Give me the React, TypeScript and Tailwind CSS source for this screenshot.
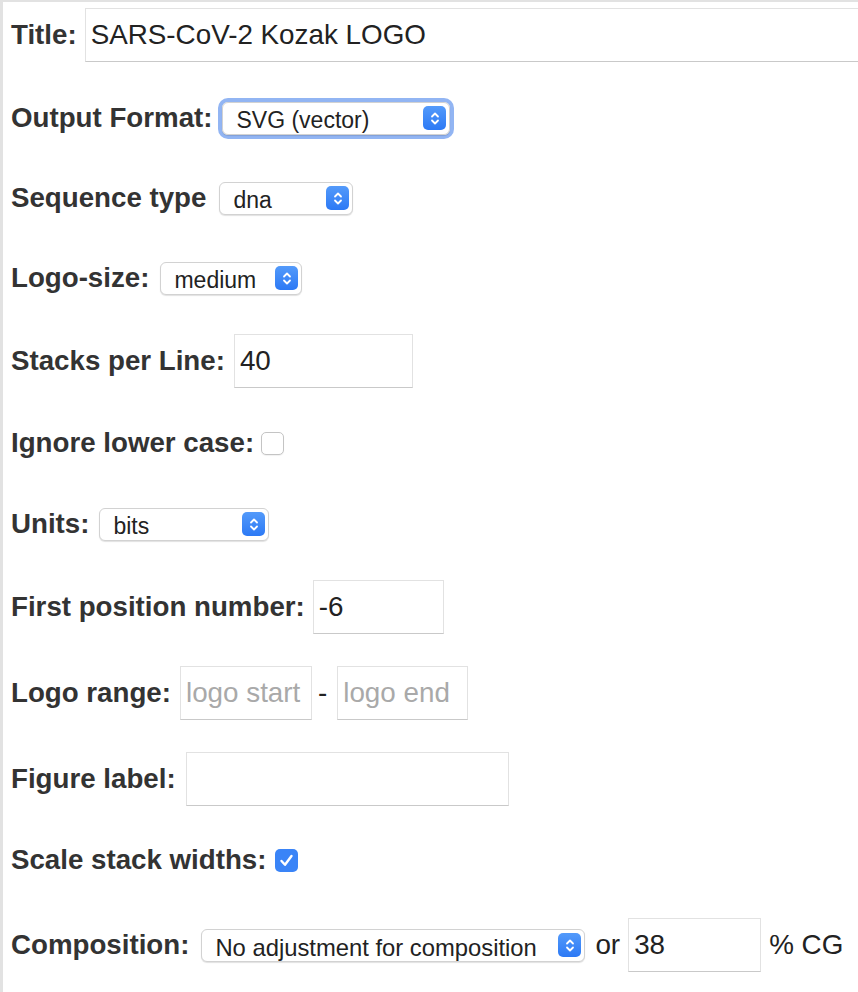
import React from 'react';

// up/down arrows of the mac style select button
const Chevrons = () => (
  <svg width="10" height="15" viewBox="0 0 10 15" fill="none" stroke="white" strokeWidth="1.8" strokeLinecap="round" strokeLinejoin="round">
    <path d="M2 5.5 L5 2.5 L8 5.5" />
    <path d="M2 9.5 L5 12.5 L8 9.5" />
  </svg>
);

const Select = ({ value, className, text = 'text-[23px]', focused = false }: { value: string; className: string; text?: string; focused?: boolean }) => (
  <div className={`relative shrink-0 rounded-[6px] ${focused ? 'shadow-[0_0_0_4px_#92b5f3]' : ''} ${className}`}>
    <select
      defaultValue={value}
      className={`block h-[33px] w-full appearance-none rounded-[6px] border border-[#d2d2d2] bg-white pl-[13px] text-[#222] shadow-[0_1px_1px_rgba(0,0,0,0.12)] outline-none ${text}`}
    >
      <option>{value}</option>
    </select>
    <span className="pointer-events-none absolute right-[4px] top-1/2 flex h-[24px] w-[23px] -translate-y-1/2 items-center justify-center rounded-[5px] bg-linear-to-b from-[#539afa] to-[#2c79f5]">
      <Chevrons />
    </span>
  </div>
);

const TextInput = ({ value = '', placeholder, className }: { value?: string; placeholder?: string; className: string }) => (
  <input
    defaultValue={value}
    placeholder={placeholder}
    className={`h-[54px] shrink-0 border border-[#e2e2e2] border-b-[#c9c9c9] bg-white pl-[5px] text-[27.8px] text-[#222] outline-none placeholder:text-[#a9a9a9] ${className}`}
  />
);

const Label = ({ children }: { children: React.ReactNode }) => (
  <span className="shrink-0 text-[27.7px] font-bold text-[#333]">{children}</span>
);

export default function App() {
  return (
    <div className="h-[992px] w-[858px] overflow-hidden border-l-[3px] border-t-2 border-[#e2e2e2] bg-white pl-2 pt-[6px] font-['Liberation_Sans',Arial,sans-serif] text-[#333]">
      <div className="flex h-[54px] items-center">
        <Label>Title:</Label>
        <TextInput value="SARS-CoV-2 Kozak LOGO" className="ml-2 w-[800px]" />
      </div>

      <div className="mt-[29px] flex h-[54px] items-center">
        <Label>Output Format:</Label>
        <Select value="SVG (vector)" focused className="ml-[10px] w-[228px]" />
      </div>

      <div className="mt-[26px] flex h-[54px] items-center">
        <Label>Sequence type</Label>
        <Select value="dna" className="ml-[13px] w-[134px]" />
      </div>

      <div className="mt-[26px] flex h-[54px] items-center">
        <Label>Logo-size:</Label>
        <Select value="medium" className="ml-[11px] w-[142px]" />
      </div>

      <div className="mt-[29px] flex h-[54px] items-center">
        <Label>Stacks per Line:</Label>
        <TextInput value="40" className="ml-[9px] w-[179px]" />
      </div>

      <div className="mt-[28px] flex h-[54px] items-center">
        <Label>Ignore lower case:</Label>
        <span className="ml-[7px] h-[23px] w-[23px] shrink-0 rounded-[5px] border border-[#c4c4c4] bg-white shadow-[0_1px_1px_rgba(0,0,0,0.06)]" />
      </div>

      <div className="mt-[27px] flex h-[54px] items-center">
        <Label>Units:</Label>
        <Select value="bits" className="ml-[10px] w-[170px]" />
      </div>

      <div className="mt-[29px] flex h-[54px] items-center">
        <Label>First position number:</Label>
        <TextInput value="-6" className="ml-2 w-[131px]" />
      </div>

      <div className="mt-[32px] flex h-[54px] items-center">
        <Label>Logo range:</Label>
        <TextInput placeholder="logo start" className="ml-[9px] w-[132px]" />
        <span className="ml-[6px] mr-[10px] text-[27.8px] text-[#222]">-</span>
        <TextInput placeholder="logo end" className="w-[131px]" />
      </div>

      <div className="mt-[32px] flex h-[54px] items-center">
        <Label>Figure label:</Label>
        <TextInput className="ml-[10px] w-[323px]" />
      </div>

      <div className="mt-[27px] flex h-[54px] items-center">
        <Label>Scale stack widths:</Label>
        <span className="ml-[9px] flex h-[23px] w-[23px] shrink-0 items-center justify-center rounded-[5px] bg-[#3a84f7]">
          <svg width="15" height="13" viewBox="0 0 15 13" fill="none" stroke="white" strokeWidth="2.4" strokeLinecap="round" strokeLinejoin="round">
            <path d="M2.5 7 L6 10.8 L12.5 2" />
          </svg>
        </span>
      </div>

      <div className="mt-[31px] flex h-[54px] items-center">
        <Label>Composition:</Label>
        <Select value="No adjustment for composition" text="text-[23.8px]" className="ml-[12px] w-[384px]" />
        <span className="ml-[10px] text-[27.8px] text-[#222]">or</span>
        <TextInput value="38" className="ml-2 w-[133px]" />
        <span className="ml-2 text-[27.8px] text-[#222]">% CG</span>
      </div>
    </div>
  );
}
